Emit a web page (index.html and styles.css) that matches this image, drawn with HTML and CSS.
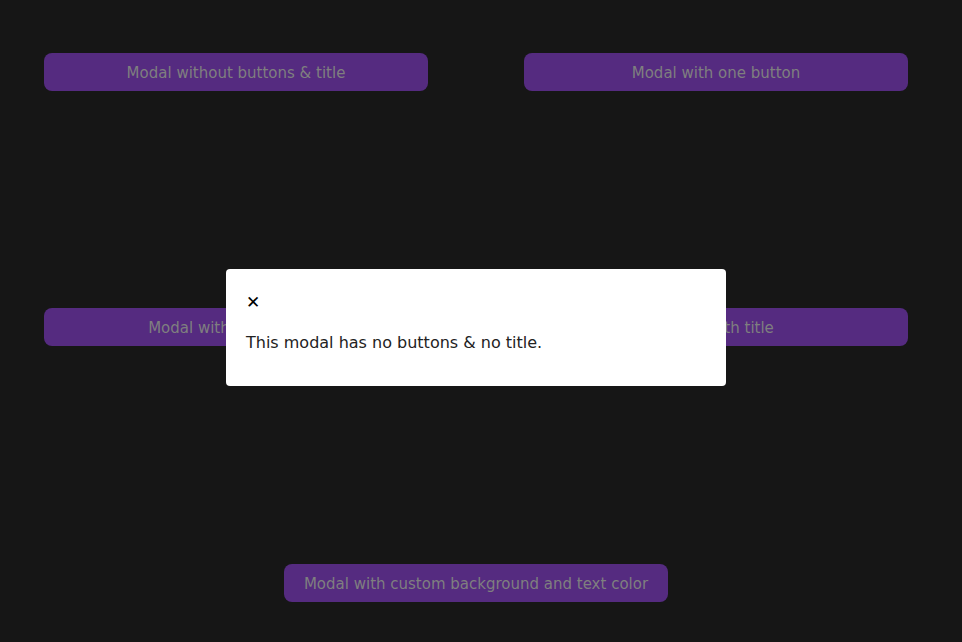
FILE: index.html
```html
<!DOCTYPE html>
<html>
<head>
<meta charset="utf-8">
<link rel="stylesheet" href="styles.css">
</head>
<body>
<div class="app">
  <div class="grid">
    <button class="btn">Modal without buttons &amp; title</button>
    <button class="btn">Modal with one button</button>
    <button class="btn">Modal with two buttons</button>
    <button class="btn">Modal with title</button>
    <button class="btn wide">Modal with custom background and text color</button>
  </div>
  <div class="overlay">
    <div class="modal">
      <div class="close">&#x2715;</div>
      <p class="content">This modal has no buttons &amp; no title.</p>
    </div>
  </div>
</div>
</body>
</html>
```
FILE: styles.css
```css
html, body {
  margin: 0;
  padding: 0;
  background: #161616;
  height: 100%;
}
.app {
  position: relative;
  width: 952px;
  height: 642px;
  font-family: "DejaVu Sans", Verdana, sans-serif;
}
.grid {
  display: grid;
  grid-template-columns: 384px 384px;
  column-gap: 96px;
  row-gap: 217px;
  padding: 53px 0 0 44px;
}
.btn {
  height: 38px;
  border: none;
  border-radius: 8px;
  background: #552b80;
  color: #7f7f7f;
  font-family: "DejaVu Sans", Verdana, sans-serif;
  font-size: 15px;
  padding: 2px 0 0 0;
}
.btn.wide {
  grid-column: 1 / span 2;
  justify-self: center;
  width: 384px;
  margin-top: 1px;
}
.overlay {
  position: absolute;
  inset: 0;
  display: flex;
  align-items: center;
  justify-content: center;
  padding-top: 13px;
}
.modal {
  width: 500px;
  box-sizing: border-box;
  background: #fff;
  border-radius: 4px;
  padding: 23px 20px 33px 20px;
}
.close {
  font-size: 17px;
  color: #000;
  line-height: 20px;
  font-weight: bold;
}
.content {
  margin: 21px 0 0 0;
  font-size: 16px;
  color: #222;
  line-height: 20px;
}
```
